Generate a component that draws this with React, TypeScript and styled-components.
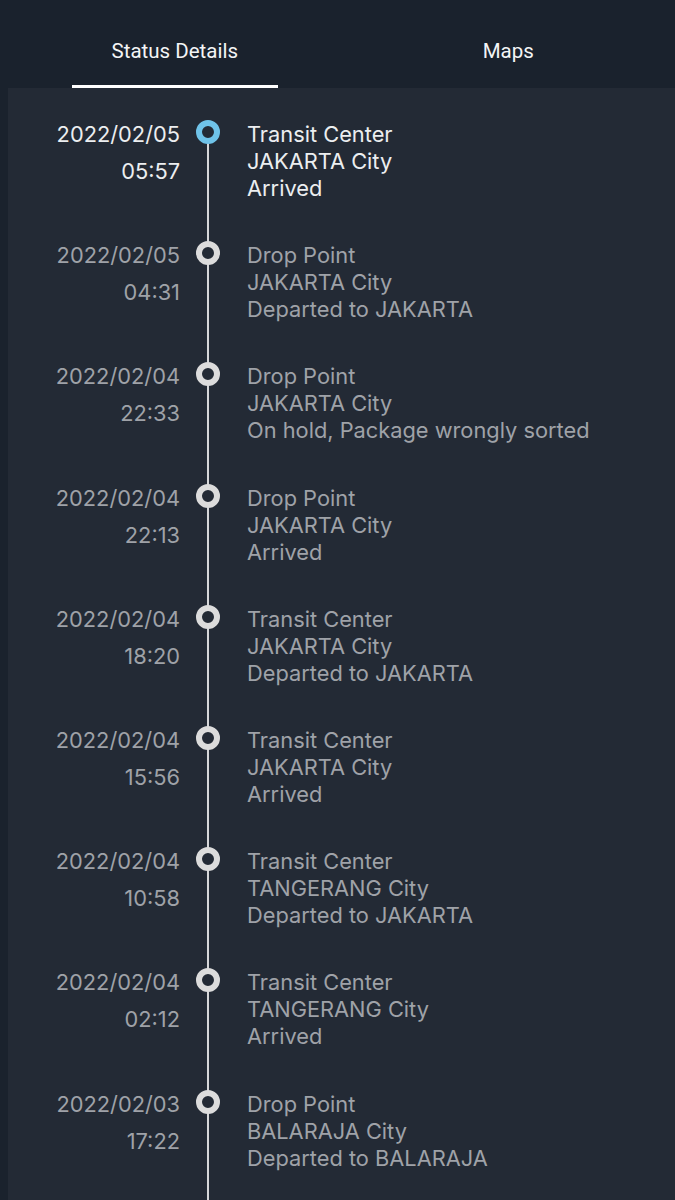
import React from 'react';
import styled, { createGlobalStyle } from 'styled-components';

type Event = {
	date: string;
	time: string;
	place: string;
	city: string;
	status: string;
};

const events: Event[] = [
	{ date: '2022/02/05', time: '05:57', place: 'Transit Center', city: 'JAKARTA City', status: 'Arrived' },
	{ date: '2022/02/05', time: '04:31', place: 'Drop Point', city: 'JAKARTA City', status: 'Departed to JAKARTA' },
	{ date: '2022/02/04', time: '22:33', place: 'Drop Point', city: 'JAKARTA City', status: 'On hold, Package wrongly sorted' },
	{ date: '2022/02/04', time: '22:13', place: 'Drop Point', city: 'JAKARTA City', status: 'Arrived' },
	{ date: '2022/02/04', time: '18:20', place: 'Transit Center', city: 'JAKARTA City', status: 'Departed to JAKARTA' },
	{ date: '2022/02/04', time: '15:56', place: 'Transit Center', city: 'JAKARTA City', status: 'Arrived' },
	{ date: '2022/02/04', time: '10:58', place: 'Transit Center', city: 'TANGERANG City', status: 'Departed to JAKARTA' },
	{ date: '2022/02/04', time: '02:12', place: 'Transit Center', city: 'TANGERANG City', status: 'Arrived' },
	{ date: '2022/02/03', time: '17:22', place: 'Drop Point', city: 'BALARAJA City', status: 'Departed to BALARAJA' },
];

const GlobalStyle = createGlobalStyle`
	html, body {
		margin: 0;
		padding: 0;
		background: #1a222d;
	}
	body {
		font-family: Inter, 'Noto Sans', sans-serif;
	}
`;

const App = () => {
	return (
		<Page>
			<GlobalStyle />
			<Tabs>
				<Tab active>Status Details</Tab>
				<Tab>Maps</Tab>
			</Tabs>
			<Panel>
				{events.map((ev, i) => (
					<Row key={i}>
						<When current={i === 0}>
							<div>{ev.date}</div>
							<Time>{ev.time}</Time>
						</When>
						<Track first={i === 0}>
							<Dot current={i === 0} />
						</Track>
						<Info current={i === 0}>
							<div>{ev.place}</div>
							<div>{ev.city}</div>
							<div>{ev.status}</div>
						</Info>
					</Row>
				))}
			</Panel>
		</Page>
	);
};

export default App;

const Page = styled.div`
	display: flex;
	flex-direction: column;
	width: 675px;
	height: 1200px;
	overflow: hidden;
	background: #1a222d;
	padding-left: 8px;
	box-sizing: border-box;
`;

const Tabs = styled.div`
	display: flex;
	flex: 0 0 88px;
	background: #1a222d;
`;

const Tab = styled.div<{ active?: boolean }>`
	flex: 1;
	position: relative;
	display: flex;
	align-items: center;
	justify-content: center;
	padding-top: 14px;
	font-family: Roboto, 'Noto Sans', sans-serif;
	font-size: 20.5px;
	color: #f4f5f6;
	&::after {
		content: '';
		display: ${(p) => (p.active ? 'block' : 'none')};
		position: absolute;
		left: 50%;
		bottom: 0;
		width: 206px;
		height: 3px;
		margin-left: -103px;
		background: #ffffff;
	}
`;

const Panel = styled.div`
	flex: 1;
	display: flex;
	flex-direction: column;
	background: #232a35;
`;

const Row = styled.div`
	display: grid;
	grid-template-columns: 172px 56px 1fr;
	flex: 0 0 121.2px;
	font-size: 21.8px;
	line-height: 27px;
	&:last-child {
		flex: 1;
	}
`;

const When = styled.div<{ current: boolean }>`
	padding-top: 33px;
	text-align: right;
	color: ${(p) => (p.current ? '#eceef0' : '#9fa2a8')};
`;

const Time = styled.div`
	margin-top: 10px;
`;

const Track = styled.div<{ first: boolean }>`
	display: flex;
	justify-content: center;
	background: linear-gradient(#d6d7d9, #d6d7d9) no-repeat;
	background-size: 2px 100%;
	background-position: ${(p) => (p.first ? 'center 44px' : 'center top')};
`;

const Dot = styled.div<{ current: boolean }>`
	width: 24px;
	height: 24px;
	margin-top: 32px;
	box-sizing: border-box;
	border-radius: 50%;
	border: 6px solid ${(p) => (p.current ? '#6fc3e9' : '#dcdcdc')};
	background: #232a35;
`;

const Info = styled.div<{ current: boolean }>`
	padding: 33px 0 0 11px;
	color: ${(p) => (p.current ? '#eceef0' : '#9fa2a8')};
	white-space: nowrap;
`;
